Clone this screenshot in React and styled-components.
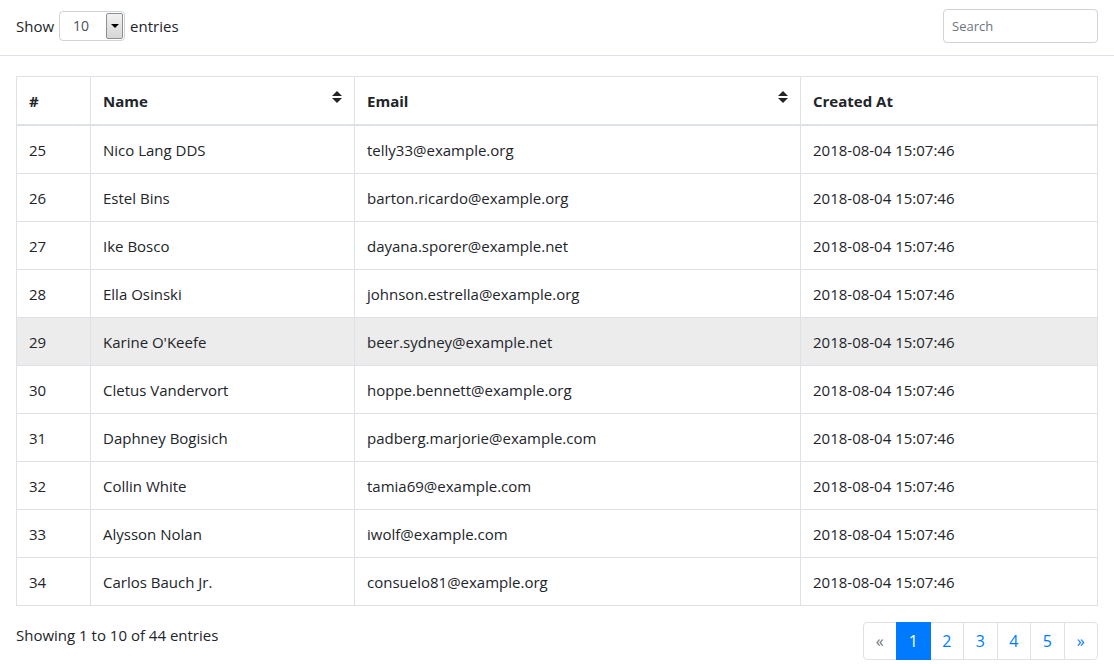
import React from 'react';
import styled, { createGlobalStyle } from 'styled-components';

const GlobalStyle = createGlobalStyle`
  html, body {
    margin: 0;
    padding: 0;
    background: #fff;
  }
  body {
    font-family: "Segoe UI", "Open Sans", "Liberation Sans", sans-serif;
    font-size: 15px;
    line-height: 24px;
    color: #212529;
  }
  * { box-sizing: border-box; }
`;

const Page = styled.div`
  width: 1114px;
  height: 664px;
  overflow: hidden;
`;

const TopBar = styled.div`
  display: flex;
  justify-content: space-between;
  align-items: center;
  height: 56px;
  padding: 0 16px;
  border-bottom: 1px solid #dee2e6;
`;

const LengthControl = styled.label`
  display: flex;
  align-items: center;
  gap: 5px;
  margin-top: -4px;
`;

const SelectBox = styled.div`
  display: flex;
  align-items: stretch;
  width: 66px;
  height: 30px;
  border: 1px solid #ced4da;
  border-radius: 4px;
  background: #fff;
  padding: 1px;
`;

const SelectValue = styled.span`
  flex: 1;
  padding-left: 12px;
  font-size: 14px;
  line-height: 26px;
  color: #495057;
`;

const SelectArrow = styled.span`
  width: 17px;
  display: flex;
  align-items: center;
  justify-content: center;
  border: 1px solid #8e8f8f;
  border-radius: 2px;
  background: linear-gradient(#f2f2f2, #d6d6d6);

  &::after {
    content: '';
    border-left: 4px solid transparent;
    border-right: 4px solid transparent;
    border-top: 4px solid #000;
  }
`;

const SearchInput = styled.input`
  width: 155px;
  height: 34px;
  padding: 4px 8px;
  margin-top: -4px;
  border: 1px solid #ced4da;
  border-radius: 4px;
  font-family: inherit;
  font-size: 13px;
  color: #495057;
  outline: none;

  &::placeholder {
    color: #6c757d;
  }
`;

const Content = styled.div`
  padding: 20px 16px 0;
`;

const Table = styled.table`
  width: 1081px;
  border-collapse: collapse;
  table-layout: fixed;
  border: 1px solid #dee2e6;
`;

const Th = styled.th`
  position: relative;
  width: ${({ w }) => w}px;
  padding: 12px 12px 11px;
  text-align: left;
  font-weight: 700;
  vertical-align: bottom;
  border: 1px solid #dee2e6;
  border-bottom: 2px solid #dee2e6;
  height: 46px;
`;

const SortIcon = styled.span`
  position: absolute;
  right: 12px;
  top: 14px;
  display: flex;
  flex-direction: column;
  gap: 2px;

  &::before,
  &::after {
    content: '';
    border-left: 5px solid transparent;
    border-right: 5px solid transparent;
  }
  &::before {
    border-bottom: 5px solid #212529;
  }
  &::after {
    border-top: 5px solid #212529;
  }
`;

const Tr = styled.tr`
  background: ${({ hover }) => (hover ? '#ececec' : 'transparent')};
`;

const Td = styled.td`
  padding: 13px 12px 11px;
  height: 47px;
  line-height: 23px;
  border: 1px solid #dee2e6;
  white-space: nowrap;
`;

const Footer = styled.div`
  display: flex;
  justify-content: space-between;
  align-items: flex-start;
  padding: 16px 16px 0;
`;

const Info = styled.div`
  padding-top: 1px;
`;

const Pagination = styled.ul`
  display: flex;
  list-style: none;
  margin: 0;
  padding: 0;
  border-radius: 4px;
`;

const PageLink = styled.li`
  height: 38px;
  padding: 8px 0;
  width: 34.5px;
  text-align: center;
  line-height: 20px;
  font-size: 16px;
  margin-left: -1px;
  border: 1px solid ${({ active }) => (active ? '#007bff' : '#dee2e6')};
  background: ${({ active }) => (active ? '#007bff' : '#fff')};
  color: ${({ active, disabled }) => (active ? '#fff' : disabled ? '#6c757d' : '#007bff')};
  position: relative;
  z-index: ${({ active }) => (active ? 1 : 0)};

  &:first-child {
    margin-left: 0;
    border-radius: 4px 0 0 4px;
  }
  &:last-child {
    border-radius: 0 4px 4px 0;
  }
`;

const rows = [
  [25, 'Nico Lang DDS', 'telly33@example.org'],
  [26, 'Estel Bins', 'barton.ricardo@example.org'],
  [27, 'Ike Bosco', 'dayana.sporer@example.net'],
  [28, 'Ella Osinski', 'johnson.estrella@example.org'],
  [29, "Karine O'Keefe", 'beer.sydney@example.net'],
  [30, 'Cletus Vandervort', 'hoppe.bennett@example.org'],
  [31, 'Daphney Bogisich', 'padberg.marjorie@example.com'],
  [32, 'Collin White', 'tamia69@example.com'],
  [33, 'Alysson Nolan', 'iwolf@example.com'],
  [34, 'Carlos Bauch Jr.', 'consuelo81@example.org'],
];

const App = () => (
  <>
    <GlobalStyle />
    <Page>
      <TopBar>
        <LengthControl>
          Show
          <SelectBox>
            <SelectValue>10</SelectValue>
            <SelectArrow />
          </SelectBox>
          entries
        </LengthControl>
        <SearchInput placeholder="Search" />
      </TopBar>

      <Content>
        <Table>
          <thead>
            <tr>
              <Th w={74}>#</Th>
              <Th w={264}>Name<SortIcon /></Th>
              <Th w={446}>Email<SortIcon /></Th>
              <Th w={297}>Created At</Th>
            </tr>
          </thead>
          <tbody>
            {rows.map(([id, name, email]) => (
              <Tr key={id} hover={id === 29}>
                <Td>{id}</Td>
                <Td>{name}</Td>
                <Td>{email}</Td>
                <Td>2018-08-04 15:07:46</Td>
              </Tr>
            ))}
          </tbody>
        </Table>
      </Content>

      <Footer>
        <Info>Showing 1 to 10 of 44 entries</Info>
        <Pagination>
          <PageLink disabled>«</PageLink>
          <PageLink active>1</PageLink>
          <PageLink>2</PageLink>
          <PageLink>3</PageLink>
          <PageLink>4</PageLink>
          <PageLink>5</PageLink>
          <PageLink>»</PageLink>
        </Pagination>
      </Footer>
    </Page>
  </>
);

export default App;
